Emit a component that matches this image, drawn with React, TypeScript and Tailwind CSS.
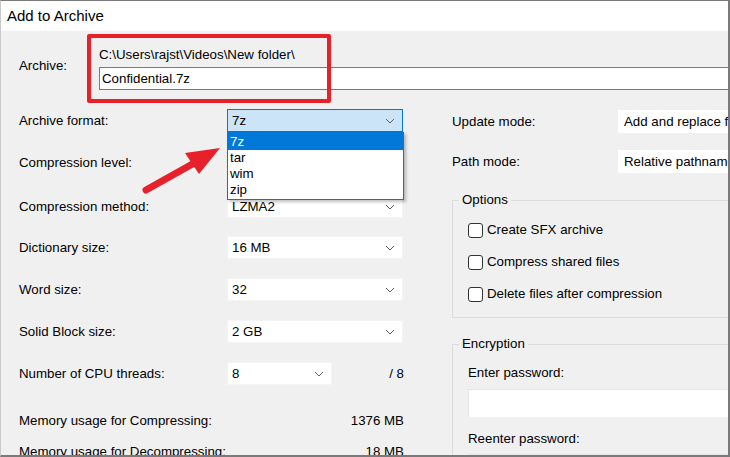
import React from "react";

const Chevron = () => (
  <svg width="10" height="6" viewBox="0 0 10 6" className="shrink-0">
    <polyline points="1,1 5,5 9,1" fill="none" stroke="#606060" strokeWidth="1" />
  </svg>
);

function Select({ value, w = "w-[176px]", focused = false }: { value: string; w?: string; focused?: boolean }) {
  return (
    <div
      className={
        "h-[23px] flex items-center justify-between pl-[4px] pr-[7px] " +
        w +
        (focused ? " bg-[#cce4f7] border border-[#0078d7]" : " bg-white border border-[#f4f4f4]")
      }
    >
      <span>{value}</span>
      <Chevron />
    </div>
  );
}

function Row({ label, children, mt }: { label: string; children?: React.ReactNode; mt: string }) {
  return (
    <div className={"flex items-center h-[23px] " + mt}>
      <div className="w-[208px] shrink-0">{label}</div>
      {children}
    </div>
  );
}

function Check({ label, mt }: { label: string; mt: string }) {
  return (
    <div className={"flex items-center gap-[4px] h-[16px] " + mt}>
      <div className="w-[15px] h-[15px] rounded-[3px] border border-[#333] bg-white" />
      <span className="leading-[16px]">{label}</span>
    </div>
  );
}

export default function App() {
  return (
    <div
      className="relative w-[730px] h-[457px] overflow-hidden flex flex-col border-t border-l border-r-2 border-b-2 border-t-[#7a7a7a] border-l-[#c8c8c8] border-r-[#7a7a7a] border-b-[#7a7a7a] text-[13.3px] text-[#000]"
      style={{ fontFamily: '"Liberation Sans", Arial, sans-serif' }}
    >
      <div className="h-[30px] shrink-0 bg-white flex items-center pl-[6px] text-[15px]">Add to Archive</div>
      <div className="flex-1 bg-[#f0f0f0] flex flex-col overflow-hidden">
        {/* archive row */}
        <div className="flex pl-[18px] shrink-0">
          <div className="w-[80px] shrink-0 pt-[25px]">Archive:</div>
          <div className="flex flex-col shrink-0">
            <div className="pt-[16px] h-[36px] leading-[15px]">C:\Users\rajst\Videos\New folder\</div>
            <div className="w-[660px] h-[23px] bg-white border border-[#7a7a7a] flex items-center pl-[2px]">
              Confidential.7z
            </div>
          </div>
        </div>
        <div className="flex flex-1">
          {/* left column */}
          <div className="w-[430px] shrink-0 pl-[18px] flex flex-col">
            <Row label="Archive format:" mt="mt-[19px]">
              <Select value="7z" focused />
            </Row>
            <Row label="Compression level:" mt="mt-[19px]">
              <Select value="Normal" />
            </Row>
            <Row label="Compression method:" mt="mt-[21px]">
              <Select value="LZMA2" />
            </Row>
            <Row label="Dictionary size:" mt="mt-[18px]">
              <Select value="16 MB" />
            </Row>
            <Row label="Word size:" mt="mt-[19px]">
              <Select value="32" />
            </Row>
            <Row label="Solid Block size:" mt="mt-[19px]">
              <Select value="2 GB" />
            </Row>
            <div className="flex items-center h-[23px] mt-[19px] w-[385px]">
              <div className="w-[208px] shrink-0">Number of CPU threads:</div>
              <Select value="8" w="w-[105px]" />
              <div className="flex-1 text-right">/ 8</div>
            </div>
            <div className="flex items-center h-[20px] mt-[26px] w-[385px] justify-between">
              <span>Memory usage for Compressing:</span>
              <span>1376 MB</span>
            </div>
            <div className="flex items-center h-[20px] mt-[11px] w-[385px] justify-between">
              <span>Memory usage for Decompressing:</span>
              <span>18 MB</span>
            </div>
          </div>
          {/* right column */}
          <div className="flex-1 min-w-0 pl-[21px] flex flex-col">
            <div className="flex items-center h-[23px] mt-[20px]">
              <div className="w-[166px] shrink-0">Update mode:</div>
              <div className="w-[200px] shrink-0 h-[23px] bg-white flex items-center pl-[6px] whitespace-nowrap">
                Add and replace files
              </div>
            </div>
            <div className="flex items-center h-[23px] mt-[17px]">
              <div className="w-[166px] shrink-0">Path mode:</div>
              <div className="w-[200px] shrink-0 h-[23px] bg-white flex items-center pl-[6px] whitespace-nowrap">
                Relative pathnames
              </div>
            </div>
            <div className="relative mt-[27px] h-[118px] border border-[#dcdcdc] border-r-0 pl-[15px] pt-[21px]">
              <div className="absolute -top-[9px] left-[6px] px-[3px] bg-[#f0f0f0] leading-[16px]">Options</div>
              <Check label="Create SFX archive" mt="mt-0" />
              <Check label="Compress shared files" mt="mt-[16px]" />
              <Check label="Delete files after compression" mt="mt-[16px]" />
            </div>
            <div className="relative mt-[26px] h-[140px] border border-[#dcdcdc] border-r-0 pl-[15px] pt-[20px]">
              <div className="absolute -top-[9px] left-[6px] px-[3px] bg-[#f0f0f0] leading-[16px]">Encryption</div>
              <div className="leading-[16px]">Enter password:</div>
              <div className="mt-[8px] h-[28px] bg-white border-l border-t border-[#e6e6e6]" />
              <div className="mt-[14px] leading-[16px]">Reenter password:</div>
              <div className="mt-[7px] h-[28px] bg-white border-l border-t border-[#e6e6e6]" />
            </div>
          </div>
        </div>
      </div>

      {/* dropdown list overlay */}
      <div className="absolute left-[226px] top-[131px] w-[177px] h-[68px] bg-white border border-[#0078d7] shadow-[2px_2px_3px_rgba(0,0,0,0.25)] flex flex-col">
        <div className="h-[17px] bg-[#0078d7] text-white pl-[2px] flex items-center">7z</div>
        <div className="h-[16px] pl-[2px] flex items-center">tar</div>
        <div className="h-[16px] pl-[2px] flex items-center">wim</div>
        <div className="h-[16px] pl-[2px] flex items-center">zip</div>
      </div>

      {/* red annotation box */}
      <div className="absolute left-[86px] top-[33px] w-[244px] h-[69px] border-[4px] border-[#e8202a] rounded-[2px]" />

      {/* red arrow */}
      <svg className="absolute left-0 top-0" width="730" height="457" viewBox="0 0 730 457">
        <line x1="145" y1="189" x2="195" y2="161" stroke="#e8202a" strokeWidth="7" strokeLinecap="round" />
        <polygon points="219,147 184,152 198,173" fill="#e8202a" />
      </svg>
    </div>
  );
}
